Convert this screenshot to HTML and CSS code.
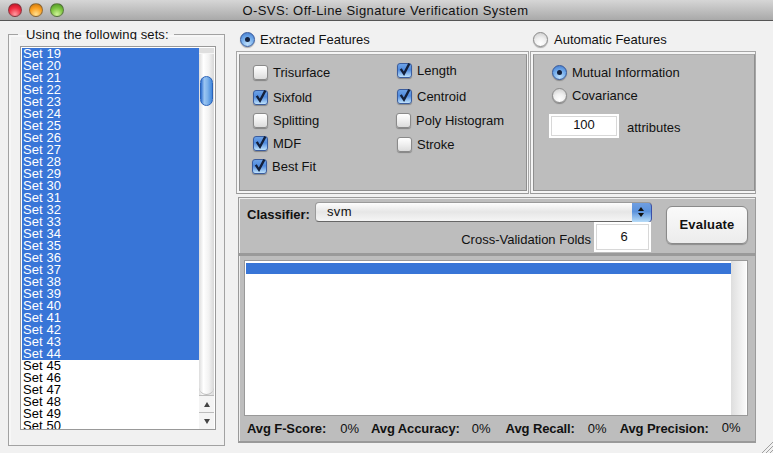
FILE: index.html
```html
<!DOCTYPE html>
<html lang="en">
<head>
<meta charset="utf-8">
<title>O-SVS</title>
<link rel="stylesheet" href="styles.css">
</head>
<body>
<div class="window">
  <header class="titlebar">
    <div class="lights"><span class="light red"></span><span class="light amber"></span><span class="light green"></span></div>
    <div class="title">O-SVS: Off-Line Signature Verification System</div>
  </header>
  <main class="content">
    <fieldset class="sets">
      <legend>Using the following sets:</legend>
      <div class="listbox">
        <div class="items">
          <div class="item sel">Set 19</div><div class="item sel">Set 20</div><div class="item sel">Set 21</div><div class="item sel">Set 22</div><div class="item sel">Set 23</div><div class="item sel">Set 24</div><div class="item sel">Set 25</div><div class="item sel">Set 26</div><div class="item sel">Set 27</div><div class="item sel">Set 28</div><div class="item sel">Set 29</div><div class="item sel">Set 30</div><div class="item sel">Set 31</div><div class="item sel">Set 32</div><div class="item sel">Set 33</div><div class="item sel">Set 34</div><div class="item sel">Set 35</div><div class="item sel">Set 36</div><div class="item sel">Set 37</div><div class="item sel">Set 38</div><div class="item sel">Set 39</div><div class="item sel">Set 40</div><div class="item sel">Set 41</div><div class="item sel">Set 42</div><div class="item sel">Set 43</div><div class="item sel">Set 44</div>
          <div class="item">Set 45</div><div class="item">Set 46</div><div class="item">Set 47</div><div class="item">Set 48</div><div class="item">Set 49</div><div class="item">Set 50</div>
        </div>
        <div class="scrollbar">
          <div class="sb-cap"></div>
          <div class="sb-track"><div class="sb-thumb"></div></div>
          <div class="sb-btn"><span class="tri up"></span></div>
          <div class="sb-btn"><span class="tri down"></span></div>
        </div>
      </div>
    </fieldset>
    <div class="right">
      <div class="modes">
        <label class="mode-a"><span class="radio on"></span>Extracted Features</label>
        <label class="mode-b"><span class="radio"></span>Automatic Features</label>
      </div>
      <div class="feature-panels">
        <section class="frame frame-a">
          <div class="gray checks">
            <div class="col col-1">
              <label class="opt o-tri"><span class="check"></span>Trisurface</label>
              <label class="opt o-six"><span class="check on"><svg viewBox="0 0 14 14"><path d="M3.5 6.5 6.5 11 11.5 1.5" /></svg></span>Sixfold</label>
              <label class="opt o-spl"><span class="check"></span>Splitting</label>
              <label class="opt o-mdf"><span class="check on"><svg viewBox="0 0 14 14"><path d="M3.5 6.5 6.5 11 11.5 1.5" /></svg></span>MDF</label>
              <label class="opt o-best"><span class="check on"><svg viewBox="0 0 14 14"><path d="M3.5 6.5 6.5 11 11.5 1.5" /></svg></span>Best Fit</label>
            </div>
            <div class="col col-2">
              <label class="opt o-len"><span class="check on"><svg viewBox="0 0 14 14"><path d="M3.5 6.5 6.5 11 11.5 1.5" /></svg></span>Length</label>
              <label class="opt o-cen"><span class="check on"><svg viewBox="0 0 14 14"><path d="M3.5 6.5 6.5 11 11.5 1.5" /></svg></span>Centroid</label>
              <label class="opt o-pol"><span class="check"></span>Poly Histogram</label>
              <label class="opt o-str"><span class="check"></span>Stroke</label>
            </div>
          </div>
        </section>
        <section class="frame frame-b">
          <div class="gray auto">
            <label class="opt o-mi"><span class="radio on"></span>Mutual Information</label>
            <label class="opt o-cov"><span class="radio"></span>Covariance</label>
            <div class="attrs"><span class="field attr-field">100</span><span class="attr-label">attributes</span></div>
          </div>
        </section>
      </div>
      <section class="classifier">
        <div class="cl-main">
          <div class="cl-row">
            <b class="cl-label">Classifier:</b>
            <div class="select"><span class="sel-text">svm</span><span class="stepper"><span class="tri up dark"></span><span class="tri down dark"></span></span></div>
          </div>
          <div class="folds"><span class="folds-label">Cross-Validation Folds</span><span class="field folds-field">6</span></div>
        </div>
        <div class="evaluate">Evaluate</div>
      </section>
      <section class="results">
        <div class="output">
          <div class="out-rows"><div class="out-bar"></div></div>
          <div class="out-scroll"></div>
        </div>
        <div class="stats">
          <b class="s1">Avg F-Score:</b><span class="v1">0%</span>
          <b class="s2">Avg Accuracy:</b><span class="v2">0%</span>
          <b class="s3">Avg Recall:</b><span class="v3">0%</span>
          <b class="s4">Avg Precision:</b><span class="v4">0%</span>
        </div>
      </section>
    </div>
  </main>
  <svg class="grip" viewBox="0 0 12 12"><path d="M1 12 12 1M5 12 12 5M9 12 12 9" /></svg>
</div>
</body>
</html>
```
FILE: styles.css
```css
* { box-sizing: border-box; }
html, body { margin: 0; padding: 0; }
body {
  width: 773px; height: 453px; overflow: hidden; background: #f1f1f1;
  font: 13px/15px "Liberation Sans", Arial, sans-serif; color: #111;
}
.window { position: relative; width: 773px; height: 453px; display: flex; flex-direction: column; }

.titlebar {
  height: 21px; flex: none; display: flex; align-items: center; position: relative;
  background: linear-gradient(#d6d6d6, #a9a9a9); border-bottom: 1px solid #555;
}
.lights { display: flex; gap: 7px; padding-left: 8px; }
.light { width: 14px; height: 14px; border-radius: 50%; border: 1px solid rgba(70,70,70,.55); }
.red { background: radial-gradient(circle at 50% 85%, #ff9aa0, #ee2a3e 55%, #b0101e); }
.amber { background: radial-gradient(circle at 50% 85%, #ffe090, #fa9e1e 55%, #c0700c); }
.green { background: radial-gradient(circle at 50% 85%, #d0f498, #78c23c 55%, #4a8a20); }
.title { position: absolute; left: 0; right: 0; text-align: center; padding-right: 2px; letter-spacing: .42px; color: #111; }

.content { flex: 1; display: flex; align-items: flex-start; padding-left: 8px; }

.sets {
  width: 217px; height: 418px; margin: 7px 0 0 0; padding: 0 8px 0 11px; flex: none;
  border: 1px solid #a2a2a2; box-shadow: inset 2px 2px 0 #f7f7f7; min-width: 0;
}
.sets legend { margin-left: -2px; padding: 0 5px 0 8px; letter-spacing: .1px; line-height: 13px; height: 12px; overflow: hidden; }
.listbox {
  margin-top: 6px; width: 196px; height: 384px; display: flex; overflow: hidden;
  background: #fff; border: 1px solid #999; padding: 1px 2px 0 1px;
}
.items { width: 177px; flex: none; }
.item { height: 12px; line-height: 12px; padding-left: 1px; letter-spacing: .08px; color: #000; }
.item.sel { background: #3875d7; color: #fff; }
.scrollbar { width: 15px; flex: none; display: flex; flex-direction: column; background: linear-gradient(90deg, #dcdcdc, #fff 30%, #f2f2f2 65%, #d8d8d8); }
.sb-cap { height: 6px; background: #dfdfdf; border-bottom: 1px solid #f5f5f5; }
.sb-track { flex: 1; padding: 22px 1px 0; border-radius: 0 0 8px 8px; border-bottom: 1px solid #bbb; }
.sb-thumb { height: 30px; width: 13px; border-radius: 7px; border: 1px solid #2b63b8; background: linear-gradient(90deg, #2f6fd0, #9cc6f2 30%, #7eb2ea 60%, #3f86dc); }
.sb-btn { height: 17px; display: flex; align-items: center; justify-content: center; border-top: 1px solid #bcbcbc; background: #f4f4f4; }
.tri { display: block; width: 0; height: 0; border-left: 3.5px solid transparent; border-right: 3.5px solid transparent; }
.tri.up { border-bottom: 5px solid #444; }
.tri.down { border-top: 5px solid #444; }
.tri.dark.up { border-left-width: 3px; border-right-width: 3px; border-bottom: 4px solid #111; }
.tri.dark.down { border-left-width: 3px; border-right-width: 3px; border-top: 4px solid #111; }

.right { margin-left: 11px; width: 520px; flex: none; display: flex; flex-direction: column; }
.modes { height: 30px; display: flex; padding-top: 10px; }
.modes label { display: flex; align-items: center; gap: 5px; height: 16px; }
.mode-a { margin-left: 4px; width: 293px; }
.modes .mode-b { gap: 6px; }
.radio {
  width: 15px; height: 15px; flex: none; border-radius: 50%; display: inline-block; position: relative;
  border: 1px solid #8a8a8a; background: radial-gradient(circle at 50% 80%, #fff, #f0f0f0 45%, #c8c8c8);
  box-shadow: 0 1px 1px rgba(0,0,0,.3);
}
.radio.on { border-color: #35589a; background: radial-gradient(circle at 50% 85%, #bfe0fb, #6fa9ea 55%, #3f74c8); }
.radio.on::after { content: ""; position: absolute; left: 4px; top: 4px; width: 5px; height: 5px; border-radius: 50%; background: #14213d; }

.feature-panels { display: flex; height: 143px; }
.frame { height: 143px; border: 1px solid #a6a6a6; border-bottom-color: #999; padding: 2px 1px 2px 2px; background: #f5f5f5; }
.frame-a { width: 293px; }
.frame-b { width: 226px; margin-left: 1px; padding-right: 0; }
.gray { height: 137px; background: #bdbdbd; border: 1px solid #8f8f8f; border-top-color: #aaa; }
.checks { display: flex; }
.col { display: flex; flex-direction: column; }
.col-1 { width: 157px; padding-left: 13px; }
.opt { display: flex; align-items: center; gap: 5px; height: 16px; position: relative; }
.check {
  width: 15px; height: 15px; flex: none; display: inline-block; border-radius: 3px; position: relative;
  border: 1px solid #8a8a8a; background: linear-gradient(#fff, #efefef 50%, #dcdcdc);
  box-shadow: 0 1px 1px rgba(0,0,0,.3);
}
.check.on { border-color: #3b5d9e; background: linear-gradient(#6da2e6, #4f8ade 45%, #bfe2fb); }
.check svg { position: absolute; left: -1px; top: -2px; width: 15px; height: 15px; overflow: visible; }
.check svg path { fill: none; stroke: #14203a; stroke-width: 2.2; }
.o-tri { margin-top: 9px; }
.o-six { margin-top: 9px; }
.o-spl { margin-top: 7px; }
.o-mdf { margin-top: 7px; }
.o-best { margin-top: 7px; margin-left: -1px; }
.o-len { margin-top: 7px; }
.o-cen { margin-top: 10px; }
.o-pol { margin-top: 8px; margin-left: -1px; }
.o-str { margin-top: 8px; }

.auto { padding-left: 18px; display: flex; flex-direction: column; }
.o-mi { margin-top: 9px; }
.o-cov { margin-top: 7px; }
.attrs { display: flex; align-items: center; gap: 8px; margin-top: 11px; margin-left: -3px; }
.attr-label { padding-top: 3px; }
.field { display: block; background: #fff; text-align: center; border: 2px solid #fff; outline: 1px solid #d8d8d8; outline-offset: -3px; }
.attr-field { width: 70px; height: 24px; line-height: 18px; }

.classifier {
  margin-top: 3px; height: 58px; margin-left: 2px; width: 518px; display: flex; background: #bdbdbd;
  border: 1px solid #9a9a9a; border-bottom-width: 2px; box-shadow: inset 1px 1px 0 #eee;
}
.cl-main { width: 414px; flex: none; padding: 4px 0 0 8px; }
.cl-row { display: flex; align-items: flex-start; gap: 5px; height: 22px; }
.cl-label { margin-top: 5px; }
.select {
  width: 337px; height: 20px; padding-left: 11px; border-radius: 4px; display: flex; justify-content: space-between; align-items: center;
  background: linear-gradient(#fdfdfd, #e6e6e6 50%, #f5f5f5); border: 1px solid #9a9a9a; border-bottom-color: #666; letter-spacing: .4px;
}
.sel-text { padding-bottom: 2px; }
.stepper { width: 20px; height: 19px; margin-right: -1px; display: flex; flex-direction: column; align-items: center; justify-content: center; gap: 2px; border-radius: 0 4px 4px 0; background: linear-gradient(#6f9ee0, #5b92dc 45%, #b7dcf8); border-right: 1px solid #3b4fa8; }
.folds { display: flex; justify-content: flex-end; align-items: center; gap: 3px; margin-top: -2px; margin-right: 2px; }
.folds-label { padding-top: 4px; }
.folds-field { width: 57px; height: 30px; line-height: 26px; padding-left: 3px; }
.evaluate {
  width: 82px; height: 38px; margin: 8px 0 0 13px; border-radius: 6px; text-align: center; line-height: 35px; font-weight: bold; letter-spacing: .2px;
  background: linear-gradient(#fafafa, #ececec); border: 1px solid #8a8a8a; box-shadow: 0 1px 1px rgba(0,0,0,.25);
}

.results {
  margin-left: 2px; width: 518px; height: 188px; background: #bdbdbd;
  border: 1px solid #9a9a9a; border-bottom-width: 2px; padding: 4px 7px 0 5px; box-shadow: inset 1px 0 0 #eee;
}
.output { height: 156px; background: #fff; border: 1px solid #999; padding: 2px 1px 0 1px; display: flex; }
.out-rows { flex: 1; }
.out-bar { height: 11px; background: #3875d7; }
.out-scroll { width: 15px; margin-top: -2px; background: linear-gradient(90deg, #dedede, #fafafa); }
.stats { height: 25px; display: flex; align-items: center; padding-left: 3px; white-space: nowrap; }
.stats b { letter-spacing: -.1px; }
.v1 { margin-left: 14px; }
.s2 { margin-left: 12px; }
.v2 { margin-left: 12px; }
.s3 { margin-left: 15px; }
.v3 { margin-left: 13px; }
.s4 { margin-left: 13px; }
.v4 { margin-left: 13px; margin-top: -2px; }
.grip { position: absolute; right: 0; bottom: 0; width: 12px; height: 12px; }
.grip path { stroke: #a0a0a0; fill: none; }
```
